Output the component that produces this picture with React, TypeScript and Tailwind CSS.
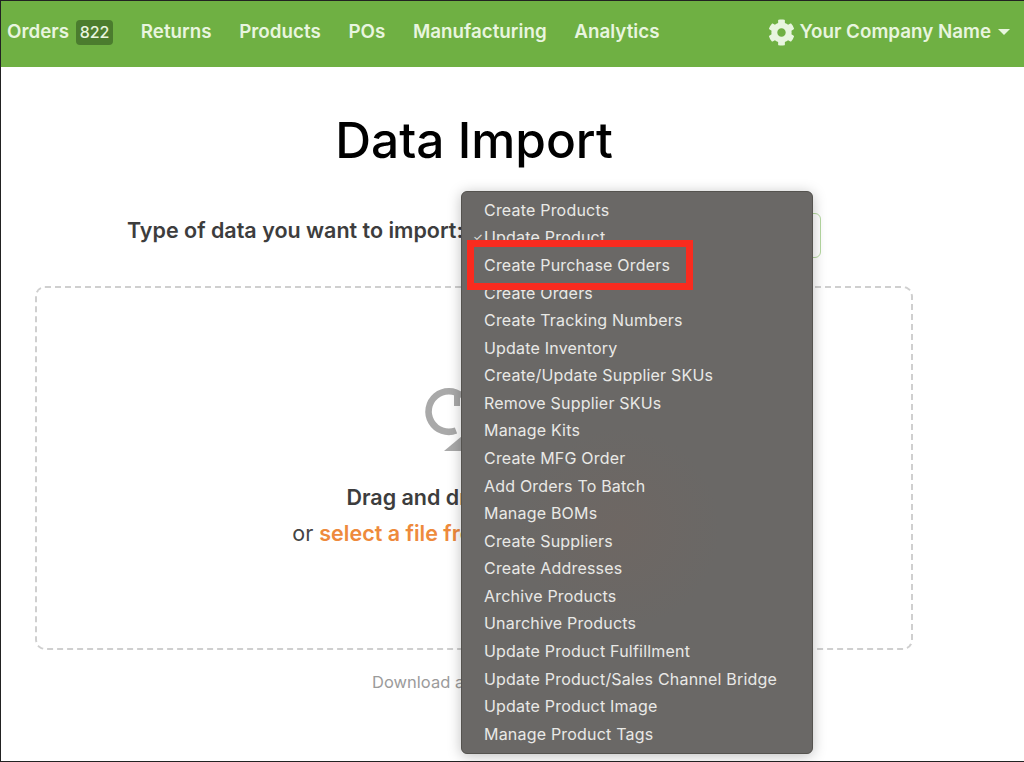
import { FaCog } from "react-icons/fa";

const navItems = ["Returns", "Products", "POs", "Manufacturing", "Analytics"];

const menuItems = [
  "Create Products",
  "Update Product",
  "Create Purchase Orders",
  "Create Orders",
  "Create Tracking Numbers",
  "Update Inventory",
  "Create/Update Supplier SKUs",
  "Remove Supplier SKUs",
  "Manage Kits",
  "Create MFG Order",
  "Add Orders To Batch",
  "Manage BOMs",
  "Create Suppliers",
  "Create Addresses",
  "Archive Products",
  "Unarchive Products",
  "Update Product Fulfillment",
  "Update Product/Sales Channel Bridge",
  "Update Product Image",
  "Manage Product Tags",
];

function UploadIcon() {
  return (
    <svg width="100" height="70" viewBox="0 0 100 70" className="block">
      <path
        d="M 38 11 A 20.3 20.3 0 1 0 32 45.5"
        fill="none"
        stroke="#a9a9a9"
        strokeWidth="6.6"
      />
      <rect x="30" y="8" width="6" height="13" fill="#a9a9a9" />
      <polygon points="20,66 50,66 50,41" fill="#a9a9a9" />
    </svg>
  );
}

export default function App() {
  return (
    <div className="relative w-[1024px] h-[762px] overflow-hidden bg-white border-t border-b border-l border-[#222] font-['Inter',sans-serif]">
      {/* NAV */}
      <nav className="h-[66px] bg-[#6fb043] flex items-center justify-between pl-[6px] pr-[14px] pb-[4px] text-[18.8px] font-semibold text-[#e8f5df]">
        <div className="flex items-center gap-[27.7px]">
          <div className="flex items-center gap-[7px]">
            <span>Orders</span>
            <span className="bg-[#4b7c2e] rounded-[4px] w-[37px] h-[25px] flex items-center justify-center text-[16px] font-medium">
              822
            </span>
          </div>
          {navItems.map((item) => (
            <span key={item}>{item}</span>
          ))}
        </div>
        <div className="flex items-center gap-[4px]">
          <FaCog size={27} color="#e8f5df" />
          <span>Your Company Name</span>
          <span className="ml-[3px] w-0 h-0 border-x-[6px] border-x-transparent border-t-[6px] border-t-[#e8f5df]" />
        </div>
      </nav>

      {/* PAGE */}
      <main className="w-[946px] flex flex-col items-center">
        <h1 className="mt-[38px] h-[70px] text-[49.6px] leading-[70px] font-medium text-black whitespace-nowrap">
          Data Import
        </h1>
        <div className="mt-[38px] flex items-start self-start ml-[126px] h-[46px]">
          <span className="mt-[1px] text-[21.5px] leading-[32px] font-semibold text-[#3d3d3d] whitespace-nowrap">
            Type of data you want to import:
          </span>
          <div className="ml-[8px] w-[350px] h-[45px] rounded-[6px] border border-[#b5d8a0] bg-white" />
        </div>
        <div className="mt-[27px] w-[878px] h-[364px] border-2 border-dashed border-[#cfcfcf] rounded-[10px] flex flex-col items-center">
          <div className="mt-[97px]">
            <UploadIcon />
          </div>
          <p className="mt-[26px] text-[21.5px] leading-[32px] font-semibold text-[#3d3d3d] whitespace-nowrap">
            Drag and drop a file here
          </p>
          <p className="mt-[4px] text-[21.5px] leading-[32px] text-[#444] whitespace-nowrap">
            or <span className="font-semibold text-[#ee8a3c]">select a file from your computer.</span>
          </p>
        </div>
        <p className="mt-[20px] text-[16.5px] text-[#9b9b9b] whitespace-nowrap">Download a template here</p>
      </main>

      {/* DROPDOWN */}
      <div className="absolute left-[460px] top-[190px] w-[352px] h-[563px] rounded-[6px] border border-[#55534f] shadow-[0_2px_14px_rgba(0,0,0,0.25)] bg-[#6a6866] bg-[radial-gradient(circle_at_45%_60%,#6e6763_0%,#6a6866_26%)] pt-[4px] text-[16px] text-[#e9e9e6]">
        {menuItems.map((item, i) => (
          <div key={item} className="relative h-[27.58px] pl-[22px] flex items-center whitespace-nowrap tracking-[0.2px]">
            {i === 1 && <span className="absolute left-[11px] text-[11px]">✓</span>}
            {item}
          </div>
        ))}
      </div>

      {/* HIGHLIGHT */}
      <div className="absolute left-[466px] top-[239px] w-[226px] h-[50px] border-[7px] border-[#f92b1f]" />
    </div>
  );
}
